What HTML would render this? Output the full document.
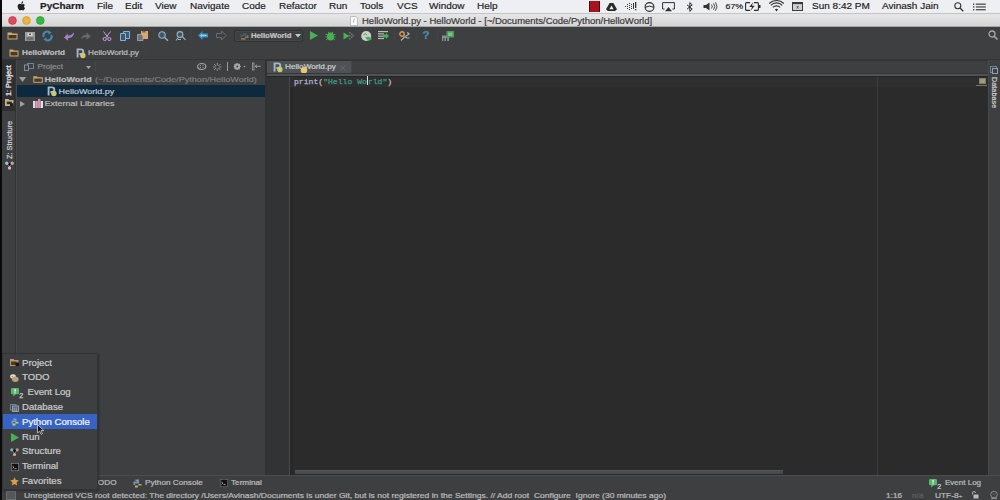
<!DOCTYPE html>
<html><head><meta charset="utf-8">
<style>
*{box-sizing:border-box}
html,body{margin:0;padding:0;width:1000px;height:500px;overflow:hidden;background:#2b2b2b;font-family:"Liberation Sans",sans-serif}
.a{position:absolute;white-space:nowrap;line-height:1}
svg{position:absolute;overflow:visible}
#menubar{position:absolute;left:0;top:0;width:1000px;height:14px;background:#eeeff2;border-bottom:1px solid #c4c4c6}
#titlebar{position:absolute;left:0;top:14px;width:1000px;height:13px;background:linear-gradient(#e6e6e6,#d6d6d6);border-bottom:1px solid #a8a8a8}
#toolbar{position:absolute;left:0;top:27px;width:1000px;height:17px;background:#3e3f41}
#navbar{position:absolute;left:0;top:44px;width:1000px;height:16px;background:#3e3f41;border-bottom:1px solid #333537}
#leftstrip{position:absolute;left:0;top:60px;width:16px;height:415px;background:#3e3f41;border-right:1px solid #313335}
#project{position:absolute;left:16px;top:60px;width:250px;height:415px;background:#3e3f41}
#editor{position:absolute;left:265px;top:60px;width:723px;height:415px;background:#2b2b2b}
#rightstrip{position:absolute;left:988px;top:60px;width:12px;height:415px;background:#3e3f41;border-left:1px solid #47494b}
#toolbottom{position:absolute;left:0;top:475px;width:1000px;height:14px;background:#3e3f41;border-top:1px solid #4a4c4e}
#statusbar{position:absolute;left:0;top:489px;width:1000px;height:11px;background:#3e3f41}
#blackstrip{position:absolute;left:0;top:0;width:2px;height:500px;background:#0a0a0a}
.mt{font-size:10px;color:#1e1e1e;top:0.7px;-webkit-text-stroke:0.2px #1e1e1e}
.t{color:#bbbbbb}
.pi{font-size:9.6px;color:#cacaca}
.tx{transform:scaleY(0.85);transform-origin:0 48%}
.mt.tx{transform:scaleY(0.92)}
#project .a,#toolbottom .a,#statusbar .a,#navbar .a,#editor .a,#toolbar .a,#leftstrip .a,#rightstrip .a,.pi{-webkit-text-stroke-width:0.25px}
</style></head><body>
<div id="menubar">
  <svg style="left:17px;top:0.8px" width="9" height="10" viewBox="0 0 9 10"><path d="M6.2 0.3c-0.6 0.1-1.3 0.5-1.6 1.1-0.3 0.5-0.4 1-0.3 1.4 0.6 0 1.2-0.4 1.5-0.9 0.3-0.5 0.4-1 0.4-1.6zM4.4 3.1c-0.6 0-1-0.4-1.7-0.4-1 0-2.1 0.8-2.1 2.6 0 1.7 1.2 4.2 2.3 4.2 0.6 0 0.8-0.4 1.5-0.4 0.7 0 0.9 0.4 1.5 0.4 1 0 1.9-1.9 2.1-2.6-1.1-0.5-1.3-2.2-0.1-3-0.5-0.6-1.2-0.8-1.7-0.8-0.8 0-1.2 0.4-1.8 0.4z" fill="#222"/></svg>
  <div class="a mt tx" style="left:40px;font-weight:bold">PyCharm</div>
  <div class="a mt tx" style="left:97px">File</div>
  <div class="a mt tx" style="left:125px">Edit</div>
  <div class="a mt tx" style="left:155px">View</div>
  <div class="a mt tx" style="left:190px">Navigate</div>
  <div class="a mt tx" style="left:242px">Code</div>
  <div class="a mt tx" style="left:279px">Refactor</div>
  <div class="a mt tx" style="left:329px">Run</div>
  <div class="a mt tx" style="left:360px">Tools</div>
  <div class="a mt tx" style="left:397px">VCS</div>
  <div class="a mt tx" style="left:429px">Window</div>
  <div class="a mt tx" style="left:477px">Help</div>
  <!-- status icons -->
  <div class="a" style="left:588.5px;top:1px;width:11.5px;height:10.5px;background:#a8141e;border-left:1.5px solid #4a0a10;border-right:1.5px solid #4a0a10"></div>
  <svg style="left:606px;top:2.5px" width="11" height="8" viewBox="0 0 11 8"><path d="M3.6 0h3.8l3.6 6.2-1.9 1.8H1.9L0 6.2z M5.5 2.6L3.4 6.2h4.2z" fill="#2a2a2a" fill-rule="evenodd"/></svg>
  <svg style="left:625px;top:2px" width="12" height="9" viewBox="0 0 12 9"><g fill="#333"><rect x="0" y="4" width="1" height="1"/><rect x="2" y="2" width="1" height="1"/><rect x="2" y="4" width="1" height="1"/><rect x="2" y="6" width="1" height="1"/><rect x="4" y="1" width="1" height="1"/><rect x="4" y="3" width="1" height="1"/><rect x="4" y="5" width="1" height="1"/><rect x="4" y="7" width="1" height="1"/><rect x="6" y="2" width="1" height="1"/><rect x="6" y="4" width="1" height="1"/><rect x="6" y="6" width="1" height="1"/><rect x="8" y="1" width="1" height="6"/><rect x="10" y="0" width="1.3" height="6"/><rect x="10" y="7" width="1.3" height="1.3"/></g></svg>
  <svg style="left:643.5px;top:1.5px" width="11" height="10" viewBox="0 0 11 10"><circle cx="5.5" cy="5" r="4.4" fill="none" stroke="#2a2a2a" stroke-width="1.1"/><path d="M1.2 5.3q4.3-2.4 8.6 0" fill="none" stroke="#2a2a2a" stroke-width="1"/></svg>
  <svg style="left:662px;top:2px" width="13" height="10" viewBox="0 0 13 10"><path d="M2.5 7H0.6V0.6h11.8V7h-1.9" fill="none" stroke="#333" stroke-width="1"/><path d="M6.5 5l3.5 4.3H3z" fill="#333"/></svg>
  <svg style="left:686px;top:1.5px" width="8" height="10" viewBox="0 0 8 10"><path d="M1 2.8l5.2 4.3-2.4 2.3V0.6l2.4 2.3L1 7.2" fill="none" stroke="#2a2a2a" stroke-width="1"/></svg>
  <svg style="left:703px;top:2px" width="15" height="9" viewBox="0 0 15 9"><path d="M0.5 3h2.5l3.5-2.5v8L3 6H0.5z" fill="#333"/><path d="M8.5 2.5q1.5 2 0 4M10.5 1.3q2.5 3.2 0 6.4M12.5 0.3q3 4.2 0 8.4" fill="none" stroke="#333" stroke-width="0.9"/></svg>
  <div class="a mt tx" style="left:725.5px;font-size:8.8px;top:1.8px">67%</div>
  <svg style="left:744.5px;top:2px" width="16" height="9" viewBox="0 0 16 9"><path d="M5 0.6H1.6q-1 0-1 1v5.8q0 1 1 1H5M9 0.6h3.4q1 0 1 1v5.8q0 1-1 1H9" fill="none" stroke="#2a2a2a" stroke-width="1.1"/><rect x="14" y="3" width="1.5" height="3" fill="#2a2a2a"/><path d="M8.3 0L4.3 5h2.8L5.5 9l4.2-5.2H6.9z" fill="#2a2a2a"/></svg>
  <svg style="left:769px;top:1.5px" width="15" height="10" viewBox="0 0 15 10"><path d="M7.5 9.5l1.6-2a2.3 2.3 0 0 0-3.2 0z" fill="#333"/><path d="M3.8 5.4a5.2 5.2 0 0 1 7.4 0M1.8 3.3a8 8 0 0 1 11.4 0M0.2 1.5a10.5 10.5 0 0 1 14.6 0" fill="none" stroke="#333" stroke-width="1.1"/></svg>
  <svg style="left:792px;top:2px" width="11" height="9" viewBox="0 0 11 9"><rect x="0.5" y="0.5" width="10" height="8" fill="#d0d0d0" stroke="#3a3a3a" stroke-width="1"/><rect x="0.5" y="0.5" width="10" height="1.6" fill="#3a3a3a"/><path d="M4.8 4l1.6 2.5M6.4 4L4.8 6.5" stroke="#444" stroke-width="0.8"/></svg>
  <div class="a mt tx" style="left:812px">Sun 8:42 PM</div>
  <div class="a mt tx" style="left:882px">Avinash Jain</div>
  <svg style="left:954px;top:2px" width="10" height="10" viewBox="0 0 10 10"><circle cx="3.8" cy="3.8" r="3" fill="none" stroke="#333" stroke-width="1.1"/><path d="M6 6l3.3 3.3" stroke="#333" stroke-width="1.3"/></svg>
  <svg style="left:973px;top:2.5px" width="13" height="8" viewBox="0 0 13 8"><g fill="#333"><rect x="0" y="0.5" width="1.3" height="1.3"/><rect x="0" y="3.3" width="1.3" height="1.3"/><rect x="0" y="6.1" width="1.3" height="1.3"/><rect x="2.8" y="0.6" width="10" height="1.1"/><rect x="2.8" y="3.4" width="10" height="1.1"/><rect x="2.8" y="6.2" width="10" height="1.1"/></g></svg>
</div>
<div id="titlebar">
  <svg style="left:7.5px;top:1.8px" width="40" height="9" viewBox="0 0 40 9"><circle cx="4.5" cy="4.5" r="3.9" fill="#e24a5a" stroke="#b83a48" stroke-width="0.7"/><circle cx="18.5" cy="4.5" r="3.9" fill="#ebb53c" stroke="#c8962a" stroke-width="0.7"/><circle cx="32.3" cy="4.5" r="3.9" fill="#36b845" stroke="#289a35" stroke-width="0.7"/></svg>
  <svg style="left:350px;top:1.5px" width="8" height="10" viewBox="0 0 8 10"><path d="M0.5 0.5h5l2 2v7h-7z" fill="#fafafa" stroke="#aaa" stroke-width="0.7"/><path d="M4.5 2.5q-1 2-1 4" stroke="#8ab" stroke-width="0.8" fill="none"/></svg>
  <div class="a tx" style="left:362px;top:1.7px;transform:scaleY(0.93);font-size:9.5px;color:#383838;-webkit-text-stroke:0.2px #383838">HelloWorld.py - HelloWorld - [~/Documents/Code/Python/HelloWorld]</div>
</div>
<div id="toolbar">
  <!-- open folder -->
  <svg style="left:6.5px;top:5px" width="11" height="8" viewBox="0 0 11 8"><path d="M0.5 0.5h4l1 1h5v6h-10z" fill="#c8a978"/><rect x="1.5" y="3" width="8" height="3.5" fill="#4a3a22"/></svg>
  <!-- save -->
  <svg style="left:24.5px;top:4.5px" width="10" height="9" viewBox="0 0 10 9"><rect x="0" y="0" width="10" height="9" fill="#9a9da0"/><rect x="2.5" y="0.8" width="5" height="3" fill="#d8d8d8"/><rect x="4" y="1.5" width="2" height="1.5" fill="#555"/><rect x="1.5" y="5" width="7" height="3.5" fill="#6d7073"/></svg>
  <!-- sync -->
  <svg style="left:41.5px;top:4px" width="11" height="10" viewBox="0 0 11 10"><path d="M1.8 6A3.7 3.7 0 0 1 7.6 1.6M9.2 4A3.7 3.7 0 0 1 3.4 8.4" fill="none" stroke="#4489b4" stroke-width="2"/><path d="M6.2 0l3.4 1.6-2.8 2.2z M4.8 10l-3.4-1.6 2.8-2.2z" fill="#4489b4"/></svg>
  <div class="a" style="left:57px;top:2px;width:1px;height:13px;border-left:1px dotted #444648"></div>
  <!-- undo -->
  <svg style="left:63.5px;top:4.5px" width="10" height="9" viewBox="0 0 10 9"><path d="M0 5.5L4 1.5v2.2q4-0.5 6-3.2q0 5-6 5.8v2.5z" fill="#a77fc8"/></svg>
  <!-- redo -->
  <svg style="left:81px;top:4.5px" width="10" height="9" viewBox="0 0 10 9"><path d="M10 4.5L5.5 0.5v2.3q-5 0-5.5 4.5q2-2.3 5.5-2v2.5z" fill="#66686b"/></svg>
  <div class="a" style="left:96.5px;top:2px;width:1px;height:13px;border-left:1px dotted #444648"></div>
  <!-- cut -->
  <svg style="left:102px;top:3.5px" width="10" height="10" viewBox="0 0 10 10"><path d="M1.5 0.5l4.5 6M8.5 0.5L4 6.5" stroke="#c9a0dc" stroke-width="1"/><circle cx="2.7" cy="8" r="1.6" fill="none" stroke="#c9a0dc" stroke-width="1"/><circle cx="7.3" cy="8" r="1.6" fill="none" stroke="#c9a0dc" stroke-width="1"/></svg>
  <!-- copy -->
  <svg style="left:119.5px;top:3.5px" width="10" height="10" viewBox="0 0 10 10"><path d="M3.5 0.5h6v7h-6z" fill="#3a5a78" stroke="#8bb0d0" stroke-width="1"/><path d="M0.5 2.5h5v7h-5z" fill="#3a5a78" stroke="#8bb0d0" stroke-width="1"/></svg>
  <!-- paste -->
  <svg style="left:137px;top:3.5px" width="11" height="10" viewBox="0 0 11 10"><rect x="4" y="0" width="7" height="8" fill="#d8a870"/><rect x="5.5" y="0" width="3" height="1.5" fill="#7a6040"/><path d="M0.5 3.5h4l1.5 1.5v4.5H0.5z" fill="#707376" stroke="#a8abae" stroke-width="0.8"/></svg>
  <div class="a" style="left:153px;top:2px;width:1px;height:13px;border-left:1px dotted #444648"></div>
  <!-- find -->
  <svg style="left:158px;top:3.5px" width="11" height="10" viewBox="0 0 11 10"><circle cx="4" cy="4" r="3.2" fill="#3a5a70" stroke="#9ab0c0" stroke-width="1.1"/><path d="M6.3 6.3l3.7 3.4" stroke="#9ab0c0" stroke-width="1.5"/></svg>
  <!-- replace -->
  <svg style="left:175px;top:3.5px" width="11" height="10" viewBox="0 0 11 10"><circle cx="5" cy="3.5" r="2.9" fill="#3a5a70" stroke="#9ab0c0" stroke-width="1.1"/><path d="M7.2 5.5l3.3 3.3M3.5 6l-2.5 3.5M3 8.5h3" stroke="#9ab0c0" stroke-width="1.1"/></svg>
  <div class="a" style="left:191px;top:2px;width:1px;height:13px;border-left:1px dotted #444648"></div>
  <!-- back -->
  <svg style="left:198px;top:4px" width="10" height="9" viewBox="0 0 10 9"><path d="M0 4.5L4.5 0v2.5H10v4H4.5V9z" fill="#3592c4"/><path d="M2 4.5L4 2.8v1h4.5v1.5H4v1z" fill="#9ad0ee"/></svg>
  <!-- forward -->
  <svg style="left:215.5px;top:4px" width="10" height="9" viewBox="0 0 10 9"><path d="M10 4.5L5.5 0v2.5H0.5v4h5V9z" fill="none" stroke="#6a6d70" stroke-width="1"/></svg>
  <div class="a" style="left:230px;top:2px;width:1px;height:13px;border-left:1px dotted #444648"></div>
  <!-- run config -->
  <div class="a" style="left:234px;top:3px;width:69px;height:12px;border:1px solid #2f3133;border-radius:2px;background:#3e3f41;box-shadow:inset 0 0 0 1px #45484a"></div>
  <svg style="left:240px;top:5.5px" width="9" height="7" viewBox="0 0 9 7"><path d="M2 0.3h4.5v2.7h-4v1.3H0.5V1.6h3V0.9z" fill="#4a5a6a"/><path d="M7 2.2h1.5v2.7h-3v1.8h-4.5V4.9h4V3.6H7z" fill="#8a7a48"/></svg>
  <div class="a t tx" style="left:251px;top:5.1px;font-size:7.7px;font-weight:bold;color:#c4c4c4">HelloWorld</div>
  <svg style="left:295px;top:7px" width="6" height="4" viewBox="0 0 6 4"><path d="M0 0h6L3 3.5z" fill="#c8c8c8"/></svg>
  <!-- run -->
  <svg style="left:309.5px;top:4px" width="8" height="9" viewBox="0 0 8 9"><path d="M0 0l8 4.5L0 9z" fill="#49b153"/></svg>
  <!-- debug -->
  <svg style="left:325px;top:3.5px" width="11" height="10" viewBox="0 0 11 10"><ellipse cx="5.5" cy="5.5" rx="3.5" ry="4" fill="#49b153"/><path d="M0.5 3.5h2M8.5 3.5h2M0.5 6h2M8.5 6h2M1 9l2-1.5M10 9L8 7.5M3 1l1.5 1M8 1L6.5 2" stroke="#49b153" stroke-width="0.9"/></svg>
  <!-- coverage -->
  <svg style="left:342.5px;top:3.5px" width="11" height="10" viewBox="0 0 11 10"><path d="M0.5 1.5l6 3.5-6 3.5z" fill="#49b153"/><g fill="#6a7f70"><rect x="6" y="1" width="1.5" height="1.5"/><rect x="8" y="2.5" width="1.5" height="1.5"/><rect x="6" y="4" width="1.5" height="1.5"/><rect x="8" y="5.5" width="1.5" height="1.5"/><rect x="6" y="7" width="1.5" height="1.5"/><rect x="9.5" y="4" width="1.3" height="1.5"/></g></svg>
  <!-- profile -->
  <svg style="left:361px;top:3.5px" width="11" height="10" viewBox="0 0 11 10"><circle cx="5.2" cy="5" r="5" fill="#c8d0c8"/><path d="M2.5 3.5q2-1.5 3.5 0.5" stroke="#6a8a70" stroke-width="1" fill="none"/><path d="M4 6.5l3.5-1 3.5 2.5-3.5 2z" fill="#49b153"/></svg>
  <!-- list arrow -->
  <svg style="left:378px;top:4px" width="11" height="9" viewBox="0 0 11 9"><g fill="#b8bfb0"><rect x="0" y="0" width="10" height="1.2"/><rect x="0" y="2.3" width="6" height="1.2"/><rect x="0" y="4.6" width="6" height="1.2"/><rect x="0" y="6.9" width="6" height="1.2"/></g><path d="M5 3.5h3V2l3 3-3 3V6.5H5z" fill="#49b153"/></svg>
  <div class="a" style="left:394px;top:2px;width:1px;height:13px;border-left:1px dotted #444648"></div>
  <!-- wrench -->
  <svg style="left:398.5px;top:3.5px" width="11" height="10" viewBox="0 0 11 10"><circle cx="3" cy="3" r="2.2" fill="none" stroke="#d99a50" stroke-width="1.4"/><path d="M2 9.5L6 5.5L8 4.5l2.5-2M8.5 1l1 2M6 5.5l2 1.5h2.5" stroke="#b0b0b0" stroke-width="1.2" fill="none"/></svg>
  <div class="a" style="left:415.5px;top:2px;width:1px;height:13px;border-left:1px dotted #444648"></div>
  <!-- help -->
  <div class="a" style="left:422.5px;top:2.6px;font-size:11.5px;font-weight:bold;color:#4a8cb4;transform:scaleY(0.88)">?</div>
  <div class="a" style="left:437px;top:2px;width:1px;height:13px;border-left:1px dotted #444648"></div>
  <!-- vcs -->
  <svg style="left:442px;top:3.5px" width="12" height="10" viewBox="0 0 12 10"><rect x="0" y="4.5" width="7" height="5.5" fill="#8c8f92"/><rect x="1.3" y="7" width="1.2" height="3" fill="#3e3f41"/><rect x="4" y="7" width="1.2" height="3" fill="#3e3f41"/><rect x="4.5" y="0" width="7.5" height="6.5" fill="#4f9a5c"/><rect x="6" y="1.5" width="4.5" height="3.5" fill="#7cc088"/></svg>
  <!-- search right -->
  <svg style="left:988px;top:3px" width="10" height="10" viewBox="0 0 10 10"><circle cx="4" cy="4" r="3" fill="none" stroke="#a8a8a8" stroke-width="1.3"/><path d="M6.2 6.2l3.3 3.3" stroke="#a8a8a8" stroke-width="1.6"/></svg>
</div>
<div id="navbar">
  <svg style="left:9px;top:5px" width="10" height="8" viewBox="0 0 10 8"><path d="M0.5 0.5h3.5l1 1h4.5v6h-9z" fill="#c8a978"/><rect x="1.5" y="2.8" width="7" height="3.7" fill="#4a3a22"/></svg>
  <div class="a tx" style="left:22px;top:4.5px;font-size:8.2px;font-weight:bold;color:#bdbdbd">HelloWorld</div>
  <svg style="left:66px;top:0px" width="6" height="16" viewBox="0 0 6 16"><path d="M0.5 0L5 8 0.5 16" stroke="#353739" stroke-width="0.8" fill="none"/><path d="M1.3 0L5.8 8 1.3 16" stroke="#46484a" stroke-width="0.6" fill="none"/></svg>
  <svg style="left:76px;top:3.5px" width="10" height="10" viewBox="0 0 10 10"><path d="M1.6 9.6V1.4h3.4a2.3 2.3 0 0 1 0 4.6H3.4" fill="none" stroke="#a4b8c8" stroke-width="1.9"/><circle cx="6.9" cy="7.5" r="2.7" fill="#d0c870"/></svg>
  <div class="a tx" style="left:88px;top:4.5px;font-size:8.2px;color:#bdbdbd">HelloWorld.py</div>
  <svg style="left:140px;top:0px" width="6" height="16" viewBox="0 0 6 16"><path d="M0.5 0L5 8 0.5 16" stroke="#353739" stroke-width="0.8" fill="none"/><path d="M1.3 0L5.8 8 1.3 16" stroke="#46484a" stroke-width="0.6" fill="none"/></svg>
</div>
<div id="leftstrip">
  <div class="a" style="left:2px;top:0;width:12.5px;height:51px;background:#2d2f31"></div>
  <div class="a" style="left:6px;top:36px;transform-origin:0 0;transform:rotate(-90deg) scaleY(0.9);font-size:7.3px;color:#e4e4e4;-webkit-text-stroke:0.3px #e4e4e4">1: Project</div>
  <svg style="left:4.8px;top:38.8px" width="8.5" height="7" viewBox="0 0 8.5 7"><path d="M0 0h3.5l0.8 1h4.2v6H0z" fill="#c4b08c"/><rect x="1.8" y="2.6" width="5" height="2.6" fill="#2e2a24"/><rect x="5" y="4.2" width="3.5" height="2.8" fill="#1e1e1e"/></svg>
  <div class="a" style="left:6.5px;top:99px;transform-origin:0 0;transform:rotate(-90deg) scaleY(0.9);font-size:7.3px;color:#d0d0d0;-webkit-text-stroke:0.25px #d0d0d0">Z: Structure</div>
  <svg style="left:5px;top:101px" width="9" height="9" viewBox="0 0 9 9"><path d="M1.5 2L4.5 5.5 7.5 2M4.5 5.5V7.5" stroke="#888" stroke-width="0.8"/><circle cx="1.8" cy="2.3" r="1.7" fill="#9cc0d4"/><circle cx="7.2" cy="2.3" r="1.7" fill="#c8a0a8"/><circle cx="4.5" cy="7" r="1.7" fill="#d8b8b4"/></svg>
</div>
<div id="project">
  <div class="a" style="left:0;top:0;width:1px;height:415px;background:#46484a"></div>
  <svg style="left:8px;top:3px" width="10" height="8" viewBox="0 0 10 8"><rect x="3.5" y="0.5" width="6" height="5" fill="none" stroke="#6a8ea8" stroke-width="0.9"/><rect x="0.5" y="2" width="4" height="5.5" fill="#3e3f41" stroke="#8a9aa8" stroke-width="0.9"/></svg>
  <div class="a tx" style="left:21.5px;top:3px;font-size:8.2px;color:#8c8e90">Project</div>
  <svg style="left:69.5px;top:6px" width="5" height="3" viewBox="0 0 5 3"><path d="M0 0h5L2.5 3z" fill="#a8a8a8"/></svg>
  <div class="a" style="left:78.5px;top:2px;width:1px;height:10px;background:#45484a"></div>
  <svg style="left:181px;top:3px" width="9.5" height="7" viewBox="0 0 9.5 7"><ellipse cx="4.75" cy="3.5" rx="4.1" ry="3" fill="none" stroke="#a4a4a4" stroke-width="1.2"/><path d="M3 2l1 1M6.5 2l-1 1M3 5l1-1M6.5 5l-1-1" stroke="#a4a4a4" stroke-width="0.9"/></svg>
  <svg style="left:196.5px;top:2.8px" width="8.5" height="8" viewBox="0 0 8.5 8"><path d="M4.25 0v2.6M4.25 5.4V8M0 4h2.6M5.9 4h2.6M1 1l2 2M7.5 1l-2 2M1 7l2-2M7.5 7l-2-2" stroke="#989898" stroke-width="0.9"/></svg>
  <div class="a" style="left:210.5px;top:2px;width:1.2px;height:8.5px;background:#9a9a9a"></div>
  <svg style="left:216.5px;top:2.8px" width="13" height="7" viewBox="0 0 13 7"><g transform="translate(4.2 3.5)"><circle r="2.3" fill="none" stroke="#a8a8a8" stroke-width="1.6"/><path d="M0-3.6V3.6M-3.6 0H3.6M-2.5-2.5L2.5 2.5M2.5-2.5L-2.5 2.5" stroke="#a8a8a8" stroke-width="1.1"/><circle r="0.9" fill="#3e3f41"/></g><path d="M10.3 3h2.4l-1.2 1.5z" fill="#a8a8a8"/></svg>
  <svg style="left:236px;top:2.8px" width="9" height="7" viewBox="0 0 9 7"><rect x="0.4" y="0" width="1.6" height="7" fill="none" stroke="#a0a0a0" stroke-width="0.8"/><path d="M3.2 3.3h5.6M3.2 3.3l1.8-1.6M3.2 3.3l1.8 1.6" stroke="#a8a8a8" stroke-width="0.9" fill="none"/></svg>
  
  <!-- row1 -->
  <svg style="left:2.5px;top:17px" width="7" height="5" viewBox="0 0 7 5"><path d="M0 0h7L3.5 5z" fill="#a0a0a0"/></svg>
  <svg style="left:16.5px;top:16px" width="10" height="7" viewBox="0 0 10 7"><path d="M0.3 0.3h3.5l1 1h5v5.5h-9.5z" fill="#c8a978"/><rect x="1.3" y="2.5" width="7.5" height="3.3" fill="#4a3a22"/></svg>
  <div class="a tx" style="left:28.5px;top:15px;font-size:9px;font-weight:bold;color:#bcbcbc">HelloWorld</div>
  <div class="a tx" style="left:79px;top:15px;font-size:9.1px;color:#7c7e80">(~/Documents/Code/Python/HelloWorld)</div>
  <!-- row2 selected -->
  <div class="a" style="left:1px;top:25px;width:248px;height:12px;background:#0d293e"></div>
  <svg style="left:31px;top:25.8px" width="10" height="10" viewBox="0 0 10 10"><path d="M1.6 9.6V1.4h3.4a2.3 2.3 0 0 1 0 4.6H3.4" fill="none" stroke="#a4b8c8" stroke-width="1.9"/><circle cx="6.9" cy="7.5" r="2.7" fill="#d0c870"/></svg>
  <div class="a tx" style="left:42.5px;top:27px;font-size:9px;color:#bfc7cf">HelloWorld.py</div>
  <!-- row3 -->
  <svg style="left:3.5px;top:40.5px" width="5" height="6" viewBox="0 0 5 6"><path d="M0 0l5 3-5 3z" fill="#a0a0a0"/></svg>
  <svg style="left:17px;top:38.5px" width="10" height="9" viewBox="0 0 10 9"><rect x="0" y="2" width="2.4" height="7" fill="#e0d8e0"/><rect x="2.6" y="2" width="2.2" height="7" fill="#d8a0b8"/><rect x="5" y="0" width="2.4" height="9" fill="#d090a8"/><rect x="7.6" y="2" width="2.4" height="7" fill="#e0e0ec"/></svg>
  <div class="a tx" style="left:28.5px;top:39px;font-size:9px;color:#bbbbbb">External Libraries</div>
</div>
<div id="editor">
  <div class="a" style="left:0;top:0;width:723px;height:15px;background:#3e3f41;border-top:1px solid #313335"></div>
  <div class="a" style="left:1.5px;top:0;width:85.5px;height:16px;background:#4e5254;border-top:1px solid #313335;border-right:1px solid #45484a"></div>
  <svg style="left:8px;top:2px" width="10" height="10" viewBox="0 0 10 10"><path d="M1.6 9.6V1.4h3.4a2.3 2.3 0 0 1 0 4.6H3.4" fill="none" stroke="#a4b8c8" stroke-width="1.9"/><circle cx="6.9" cy="7.5" r="2.7" fill="#d0c870"/></svg>
  <div class="a tx" style="left:20px;top:3.3px;font-size:8.2px;color:#cccccc">HelloWorld.py</div>
  <svg style="left:75px;top:4.5px" width="6" height="6" viewBox="0 0 6 6"><path d="M0.5 0.5l5 5M5.5 0.5l-5 5" stroke="#65686b" stroke-width="0.9"/></svg>
  <svg style="left:34.5px;top:7px" width="8" height="9" viewBox="0 0 8 9"><circle cx="4" cy="3.2" r="3.2" fill="#e8c870"/><rect x="2.5" y="6.3" width="3" height="1.2" fill="#a89868"/><rect x="2.8" y="7.8" width="2.4" height="0.8" fill="#888"/></svg>
  <div class="a" style="left:2px;top:13.3px;width:721px;height:1px;background:#333537"></div><div class="a" style="left:2px;top:14.3px;width:721px;height:1.9px;background:#505355"></div><div class="a" style="left:2px;top:16.2px;width:721px;height:0.8px;background:#262626"></div>
  <div class="a" style="left:0;top:0;width:2px;height:415px;background:#2f3133"></div>
  <!-- gutter -->
  <div class="a" style="left:2px;top:16.5px;width:22px;height:398.5px;background:#313335"></div>
  <div class="a" style="left:24px;top:16.5px;width:1px;height:398.5px;background:#494a4b"></div><div class="a" style="left:25px;top:17px;width:3px;height:398px;background:#282828"></div>
  <!-- current line -->
  <div class="a" style="left:25px;top:17px;width:698px;height:9.5px;background:#2f2f2f"></div>
  <div class="a" style="left:612px;top:16.5px;width:1px;height:398.5px;background:#3b3b3b"></div>
  <div class="a" style="left:29px;top:15.5px;font-family:'Liberation Mono',monospace;font-size:8.1px;line-height:11px;color:#c8c8c8"><span style="color:#b4b2d6">print</span>(<span style="color:#3f9a88">&quot;Hello Wo</span><span style="display:inline-block;width:0;border-left:1px solid #e0e0e0;height:9px;vertical-align:-1.5px"></span><span style="color:#3f9a88">rld&quot;</span>)</div>
  <!-- marker -->
  <div class="a" style="left:714px;top:18px;width:7px;height:6px;background:#a09a78;border:1px solid #807a60"></div>
  <div class="a" style="left:711px;top:25px;width:11px;height:1.3px;background:#7a7560"></div>
  <!-- hscrollbar -->
  <div class="a" style="left:30px;top:410px;width:488px;height:4px;background:#4a4b4c;border-top:1px solid #555657"></div>
</div>
<div id="rightstrip">
  <svg style="left:1px;top:6px" width="8" height="8" viewBox="0 0 8 8"><rect x="0.5" y="0.5" width="6" height="6" fill="none" stroke="#6a8ea8" stroke-width="0.9"/><rect x="2.5" y="2.5" width="5" height="5" fill="#3e3f41" stroke="#9aaab8" stroke-width="0.9"/></svg>
  <div class="a" style="left:9px;top:16.5px;transform-origin:0 0;transform:rotate(90deg);font-size:7.3px;color:#d0d0d0;-webkit-text-stroke:0.2px #d0d0d0">Database</div>
</div>
<div id="toolbottom">
  <div class="a tx" style="left:93px;top:2.5px;font-size:8.2px;color:#bbbbbb">TODO</div>
  <svg style="left:133px;top:2.5px" width="9" height="9" viewBox="0 0 9 9"><path d="M2.5 0.5h3.5v4h-4v1.5H0.5v-3.5h3.5V2h-1.5z" fill="#7a96b0"/><path d="M8.5 3v3.5h-3.5v2h-3v-2h3.5V5h3z" fill="#b8b060"/></svg>
  <div class="a tx" style="left:145px;top:2.5px;font-size:8.2px;color:#bbbbbb">Python Console</div>
  <svg style="left:219.5px;top:3px" width="8" height="8" viewBox="0 0 8 8"><rect x="0.3" y="0.3" width="7.4" height="7.4" fill="#111" stroke="#777" stroke-width="0.6"/><path d="M1.5 3l1.5 1.2L1.5 5.4M3.5 5.5h2" stroke="#ddd" stroke-width="0.7" fill="none"/></svg>
  <div class="a tx" style="left:231px;top:2.5px;font-size:8.2px;color:#bbbbbb">Terminal</div>
  <svg style="left:929px;top:2.5px" width="13" height="10" viewBox="0 0 13 10" overflow="visible"><rect x="0" y="0" width="8" height="6.3" rx="1.3" fill="#5fb36f"/><path d="M2.2 6v2.6L5 6z" fill="#5fb36f"/><rect x="3.4" y="1" width="1.3" height="2.7" fill="#e8f8e8"/><rect x="3.4" y="4.3" width="1.3" height="1.1" fill="#e8f8e8"/><text x="8.2" y="9.8" font-size="7" fill="#d0d0d0" stroke="#d0d0d0" stroke-width="0.25" font-family="Liberation Sans">2</text></svg>
  <div class="a tx" style="left:945px;top:2.5px;font-size:8px;color:#bbbbbb">Event Log</div>
</div>
<div id="statusbar">
  <div class="a" style="left:5.5px;top:2px;width:10px;height:9px;background:#55585b;border:1px solid #6a6d70"></div>
  <div class="a tx" style="left:24px;top:1.5px;font-size:8.52px;color:#bbbbbb">Unregistered VCS root detected: The directory /Users/Avinash/Documents is under Git, but is not registered in the Settings. // Add root&nbsp; Configure&nbsp; Ignore (30 minutes ago)</div>
  <div class="a tx" style="left:886px;top:1.5px;font-size:8.3px;color:#bbbbbb">1:16</div>
  <div class="a tx" style="left:912px;top:1.5px;font-size:8.3px;color:#5e6062">n/a</div>
  <div class="a tx" style="left:935px;top:1.5px;font-size:8.3px;color:#bbbbbb">UTF-8<span style="font-size:7px">&#247;</span></div>
  <svg style="left:971px;top:2px" width="8" height="8" viewBox="0 0 8 8"><path d="M1.5 3.5V2a1.5 1.5 0 0 1 3 0" stroke="#bbb" stroke-width="0.9" fill="none"/><rect x="2.5" y="3.5" width="5" height="4" fill="#bbb"/></svg>
  <svg style="left:990px;top:1.5px" width="8" height="9" viewBox="0 0 8 9"><ellipse cx="4" cy="3.5" rx="3.3" ry="3.2" fill="none" stroke="#999" stroke-width="0.8"/><path d="M1.5 7.5h5M2 6v2.5M6 6v2.5M2.8 3h0.8M4.6 3h0.8" stroke="#999" stroke-width="0.8"/></svg>
</div>
<!-- popup -->
<div class="a" style="left:2px;top:353px;width:96px;height:137px;background:#3e3f41;border:1px solid #323436;box-shadow:1px 1px 2px rgba(0,0,0,0.3)">
  <svg style="left:6.5px;top:5px" width="9" height="7" viewBox="0 0 9 7"><path d="M0 0h3.5l1 1h4v6H0z" fill="#b8996c"/><rect x="1" y="2.5" width="5.5" height="3.5" fill="#4a3a22"/><rect x="5.5" y="3.5" width="3.5" height="3.5" fill="#1a1a1a"/></svg>
  <div class="a pi tx" style="left:19px;top:4.50px">Project</div>
  <svg style="left:7px;top:19.5px" width="9" height="8" viewBox="0 0 9 8"><ellipse cx="3" cy="2.5" rx="2.8" ry="2.2" fill="#e8e0c8"/><ellipse cx="5.3" cy="5.3" rx="3.3" ry="2.7" fill="#b8a078"/><circle cx="2.2" cy="2.5" r="0.6" fill="#555"/></svg>
  <div class="a pi tx" style="left:19px;top:19.25px">TODO</div>
  <svg style="left:7.5px;top:33.5px" width="13" height="10" viewBox="0 0 13 10"><rect x="0" y="0" width="8" height="6.3" rx="1.3" fill="#5fb36f"/><path d="M2.2 6v2.6L5 6z" fill="#5fb36f"/><rect x="3.4" y="1" width="1.3" height="2.7" fill="#e8f8e8"/><rect x="3.4" y="4.3" width="1.3" height="1.1" fill="#e8f8e8"/><text x="8.2" y="9.8" font-size="7" fill="#d0d0d0" stroke="#d0d0d0" stroke-width="0.25" font-family="Liberation Sans">2</text></svg>
  <div class="a pi tx" style="left:24.5px;top:33.75px">Event Log</div>
  <svg style="left:7px;top:49.5px" width="9" height="8" viewBox="0 0 9 8"><rect x="0.5" y="0.5" width="5.5" height="5.5" fill="#3e3f41" stroke="#6a8ea8" stroke-width="0.9"/><rect x="2.5" y="2" width="6" height="5.5" fill="#556070" stroke="#9aaab8" stroke-width="0.9"/><path d="M4.2 3.5v3.5M6.2 3.5v3.5" stroke="#c0c8d0" stroke-width="0.7"/></svg>
  <div class="a pi tx" style="left:19px;top:49.25px">Database</div>
  <div class="a" style="left:0;top:60px;width:94px;height:15px;background:#3764c4"></div>
  <svg style="left:8px;top:64px" width="8" height="8" viewBox="0 0 8 8"><path d="M2 0.5h3.5v3.5h-3.5v1.5H0.5v-3h3V1.8h-1.5z" fill="#7aa0c8"/><path d="M7.5 2.5v3h-3v2h-3v-2h3V4h3z" fill="#d8c850"/></svg>
  <div class="a pi tx" style="left:19px;top:63.50px;color:#f0f4ff">Python Console</div>
  <svg style="left:8px;top:78.5px" width="8" height="9" viewBox="0 0 8 9"><path d="M0 0l8 4.5L0 9z" fill="#49b153"/></svg>
  <div class="a pi tx" style="left:19px;top:78.75px">Run</div>
  <svg style="left:7px;top:94px" width="9" height="8" viewBox="0 0 9 8"><path d="M1.8 1.8L4.5 5.5 7.2 1.8M4.5 5.5V6.5" stroke="#999" stroke-width="0.8"/><circle cx="1.8" cy="1.8" r="1.6" fill="#7aaed0"/><circle cx="7.2" cy="1.8" r="1.6" fill="#c89090"/><circle cx="4.5" cy="6.5" r="1.5" fill="#d8b090"/></svg>
  <div class="a pi tx" style="left:19px;top:93.00px">Structure</div>
  <svg style="left:7.5px;top:108.5px" width="8" height="8" viewBox="0 0 8 8"><rect x="0.3" y="0.3" width="7.4" height="7.4" fill="#111" stroke="#888" stroke-width="0.7"/><path d="M1.6 3.2l1.4 1.1-1.4 1.1M3.5 5.6h2" stroke="#ddd" stroke-width="0.7" fill="none"/></svg>
  <div class="a pi tx" style="left:19px;top:108.00px">Terminal</div>
  <svg style="left:7px;top:123px" width="9" height="9" viewBox="0 0 9 9"><path d="M4.5 0.2l1.3 2.7 3 0.4-2.2 2.1 0.5 3L4.5 6.9 1.9 8.4l0.5-3L0.2 3.3l3-0.4z" fill="#d8a048"/></svg>
  <div class="a pi tx" style="left:19px;top:123.00px">Favorites</div>
  <svg style="left:33.5px;top:70px" width="8" height="11" viewBox="0 0 8 11"><path d="M0.5 0.5v8.5l2.1-1.9 1.5 3.2 1.3-0.6-1.5-3.1h2.9z" fill="#111" stroke="#e8e8e8" stroke-width="0.7"/></svg>
</div>
<div id="blackstrip"></div>
</body></html>
